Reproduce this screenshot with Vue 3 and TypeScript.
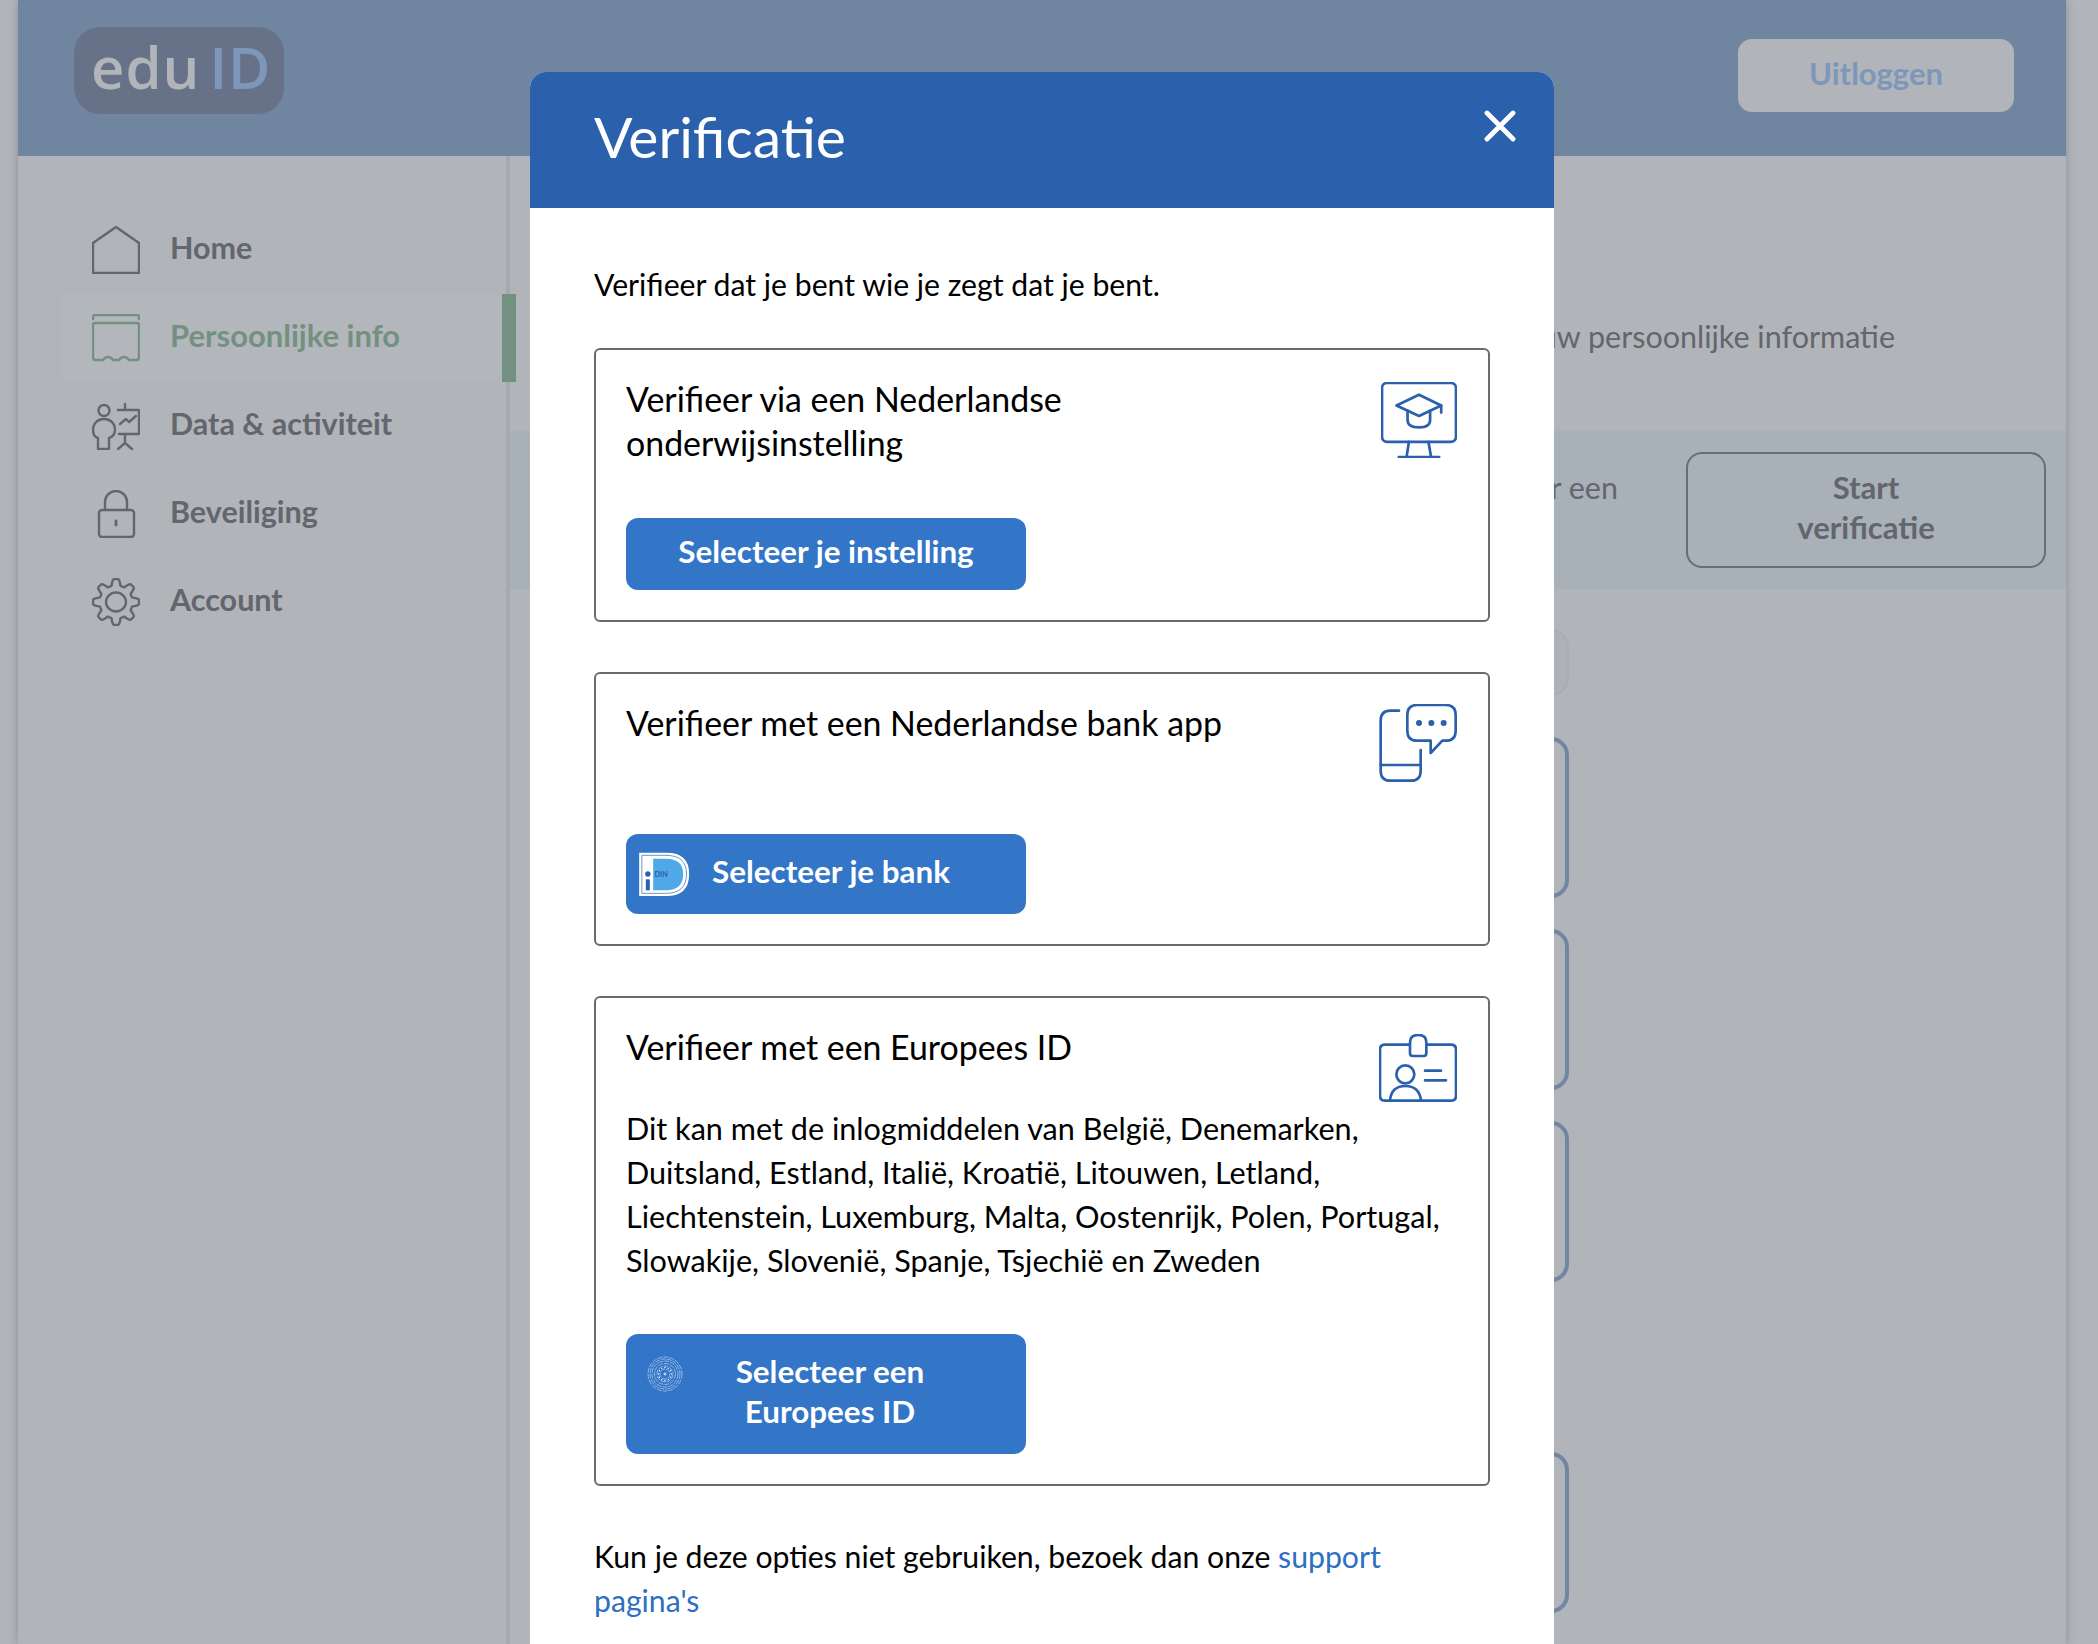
<script setup lang="ts">
const navItems = [
  { label: 'Home', icon: 'home', active: false },
  { label: 'Persoonlijke info', icon: 'person', active: true },
  { label: 'Data & activiteit', icon: 'data', active: false },
  { label: 'Beveiliging', icon: 'lock', active: false },
  { label: 'Account', icon: 'gear', active: false },
]

const detailBoxes = [
  { id: 'naam', muted: true },
  { id: 'email', muted: false },
  { id: 'telefoon', muted: false },
  { id: 'instelling', muted: false },
  { id: 'link', muted: false },
]

// wavy outline for the settings gear, eight teeth
function gearPath(): string {
  const pts: string[] = []
  for (let i = 0; i < 144; i++) {
    const a = (i / 144) * Math.PI * 2
    const wave = Math.max(-1, Math.min(1, Math.cos(a * 8) * 1.7))
    const r = 19.8 + wave * 3.2
    pts.push(`${(24 + Math.cos(a) * r).toFixed(2)} ${(24 + Math.sin(a) * r).toFixed(2)}`)
  }
  return 'M' + pts.join('L') + 'Z'
}

const gear = gearPath()
const euRings = [5, 8, 10.5, 13, 15, 17]
const euDots = Array.from({ length: 12 }, (_, i) => {
  const a = (i / 12) * Math.PI * 2
  return { x: 18 + Math.cos(a) * 6.5, y: 18 + Math.sin(a) * 6.5 }
})
</script>

<template>
  <div class="page">
    <header class="topbar">
      <div class="logo"><span>edu</span><span class="logo-id">ID</span></div>
      <button class="logout">Uitloggen</button>
    </header>
    <div class="columns">
      <nav class="sidebar">
        <a v-for="item in navItems" :key="item.label" class="nav-item" :class="{ active: item.active }">
          <svg class="nav-icon" viewBox="0 0 48 48" fill="none" stroke="currentColor" stroke-width="2.4" stroke-linejoin="round" stroke-linecap="round">
            <path v-if="item.icon === 'home'" d="M1 47V17L24 1L47 17V47Z" />
            <g v-else-if="item.icon === 'person'">
              <path d="M1 5V3Q1 1 3 1H45Q47 1 47 3V5" />
              <path d="M3 9H45Q47 9 47 11V43Q47 46 44 46H37Q35 43 32 43Q29 43 27 46H21Q19 43 16 43Q13 43 11 46H4Q1 46 1 43V11Q1 9 3 9Z" />
            </g>
            <g v-else-if="item.icon === 'data'">
              <circle cx="12" cy="8.5" r="5.5" />
              <path d="M6 47H17V36C20 35 23 33 23 28C23 21 18 17 12 17C6 17 1 21 1 28C1 33 3 35 6 36Z" />
              <path d="M26 8H47V32H27M33 2V8M33 32V41M26 47L33 41L40 47M28 22L34 17L37 20L44 14" />
            </g>
            <g v-else-if="item.icon === 'lock'">
              <rect x="7" y="20" width="35" height="27" rx="3" />
              <path d="M13 20V12A11 11 0 0 1 35 12V20" />
              <path d="M24 31V35" stroke-width="2.8" />
            </g>
            <g v-else>
              <path :d="gear" />
              <ellipse cx="24" cy="24" rx="10" ry="9.5" />
            </g>
          </svg>
          <span>{{ item.label }}</span>
        </a>
      </nav>
      <main class="content">
        <p class="intro">Bekijk, beheer en wijzig hier op elk moment uw persoonlijke informatie</p>
        <section class="verify-band">
          <p>Verifieer je account voor een<br />betere ervaring</p>
          <button class="start-btn">Start<br />verificatie</button>
        </section>
        <div class="details">
          <div v-for="box in detailBoxes" :key="box.id" class="detail-box" :class="[box.id, { muted: box.muted }]"></div>
        </div>
      </main>
    </div>
  </div>

  <div class="modal">
    <div class="modal-head">
      <h1>Verificatie</h1>
      <svg class="close" viewBox="0 0 32 32" fill="none" stroke="#fff" stroke-width="4.8" stroke-linecap="round">
        <path d="M3 3L29 29M29 3L3 29" />
      </svg>
    </div>
    <div class="modal-body">
      <p class="lead">Verifieer dat je bent wie je zegt dat je bent.</p>

      <section class="card">
        <div class="card-head">
          <h2>Verifieer via een Nederlandse onderwijsinstelling</h2>
          <svg class="card-icon" viewBox="124 127 226 226" fill="none" stroke="#2a60ac" stroke-width="8" stroke-linecap="round" stroke-linejoin="round">
            <rect x="127" y="130" width="220" height="175" rx="15" />
            <path d="M207 305L200 350M265 305L273 350M177 350H297" />
            <path d="M237 165L170 197L237 228L303 197Z" />
            <path d="M303 197V218M203 212V240Q203 262 237 262Q270 262 270 240V212" />
          </svg>
        </div>
        <button class="action action-plain">Selecteer je instelling</button>
      </section>

      <section class="card second">
        <div class="card-head">
          <h2>Verifieer met een Nederlandse bank app</h2>
          <svg class="card-icon phone" viewBox="116 75 232 234" fill="none" stroke="#2a60ac" stroke-width="8" stroke-linecap="round" stroke-linejoin="round">
            <path d="M175 95H150Q120 95 120 125V275Q120 305 150 305H210Q240 305 240 275V213" />
            <path d="M120 258H240" />
            <path d="M230 78H315Q345 78 345 108V155Q345 185 315 185H305L270 222V185H230Q200 185 200 155V108Q200 78 230 78Z" />
            <g fill="#2a60ac" stroke="none">
              <circle cx="235" cy="132" r="9" />
              <circle cx="272" cy="132" r="9" />
              <circle cx="309" cy="132" r="9" />
            </g>
          </svg>
        </div>
        <button class="action action-bank">
          <svg class="idin" viewBox="85 90 155 132">
            <path d="M88 92H170Q238 92 238 156Q238 222 170 222H88Z" fill="#fff" />
            <path d="M96 100H168Q230 100 230 156Q230 214 168 214H96Z" fill="#fff" stroke="#2a60ac" stroke-width="2" />
            <path d="M130 110H168Q220 110 220 156Q220 205 168 205H130Z" fill="#4fa8e8" />
            <circle cx="114" cy="156" r="8" fill="#2a60ac" />
            <rect x="108" y="172" width="12" height="33" fill="#2a60ac" />
            <text x="134" y="164" font-size="22" fill="#2a60ac">DIN</text>
          </svg>
          <span>Selecteer je bank</span>
        </button>
      </section>

      <section class="card">
        <div class="card-head short">
          <h2>Verifieer met een Europees ID</h2>
          <svg class="card-icon badge" viewBox="117 72 234 204" fill="none" stroke="#2a60ac" stroke-width="8" stroke-linecap="round" stroke-linejoin="round">
            <path d="M208 104H135Q120 104 120 119V257Q120 272 135 272H333Q348 272 348 257V119Q348 104 333 104H260" />
            <path d="M210 130V98Q210 75 235 75Q259 75 259 98V130Q259 138 251 138H218Q210 138 210 130Z" />
            <circle cx="196" cy="193" r="27" />
            <path d="M150 270Q155 228 196 228Q237 228 243 270M255 182H303M255 211H318" />
          </svg>
        </div>
        <p class="card-text">Dit kan met de inlogmiddelen van België, Denemarken, Duitsland, Estland, Italië, Kroatië, Litouwen, Letland, Liechtenstein, Luxemburg, Malta, Oostenrijk, Polen, Portugal, Slowakije, Slovenië, Spanje, Tsjechië en Zweden</p>
        <button class="action action-eu">
          <svg class="eu" viewBox="0 0 36 36" fill="none">
            <circle v-for="r in euRings" :key="r" cx="18" cy="18" :r="r" stroke="#bcd2ee" stroke-width=".7" stroke-dasharray="5 1" />
            <circle v-for="(d, i) in euDots" :key="i" :cx="d.x" :cy="d.y" r=".7" fill="#fff" />
            <path d="M16.5 18H19.5M18 16.5V19.5" stroke="#fff" stroke-width=".9" />
          </svg>
          <span>Selecteer een<br />Europees ID</span>
        </button>
      </section>

      <p class="support">Kun je deze opties niet gebruiken, bezoek dan onze <a>support pagina's</a></p>
    </div>
  </div>
</template>

<style>
html,
body {
  background: #b1b4b9;
}
</style>

<style scoped>
.page {
  margin: 0 32px 0 18px;
  height: 1644px;
  overflow: hidden;
  background: #b1b4b9;
  box-shadow: 0 0 8px rgba(70, 75, 85, 0.35);
  font-family: Lato, "Noto Sans", sans-serif;
  font-size: 30.5px;
  line-height: 44px;
  color: #63666c;
}
.topbar {
  height: 156px;
  background: #7086a0;
  display: flex;
  justify-content: space-between;
  align-items: flex-start;
  padding: 27px 52px 0 56px;
  box-sizing: border-box;
}
.logo {
  width: 210px;
  height: 87px;
  box-sizing: border-box;
  padding-left: 17px;
  border-radius: 26px;
  background: #677289;
  color: #b1b4b9;
  font-family: "Open Sans", sans-serif;
  font-weight: 600;
  font-size: 58px;
  line-height: 80px;
  letter-spacing: 1px;
}
.logo-id {
  margin-left: 9px;
  color: #7c97b9;
}
.logout {
  width: 276px;
  height: 73px;
  margin-top: 12px;
  border: 0;
  border-radius: 14px;
  background: #b1b4b9;
  color: #7c97b9;
  font: 700 31px/66px Lato, sans-serif;
  padding: 0 0 6px;
}
.columns {
  display: flex;
  height: 1488px;
}
.sidebar {
  position: relative;
  z-index: 1;
  width: 492px;
  flex: none;
  box-sizing: border-box;
  padding: 50px 0 0 44px;
  border-right: 4px solid #a6a9af;
  display: flex;
  flex-direction: column;
}
.nav-item {
  height: 88px;
  margin-right: -10px;
  padding-left: 30px;
  display: flex;
  align-items: center;
  gap: 30px;
  font-weight: 700;
  box-sizing: border-box;
}
.nav-item span {
  padding-bottom: 7px;
}
.nav-item.active {
  background: #b3b6bb;
  color: #739080;
  border-right: 14px solid #739080;
  font-size: 31px;
}
.nav-icon {
  width: 48px;
  height: 48px;
  flex: none;
}
.content {
  flex: 1;
  min-width: 0;
}
.intro {
  margin: 0;
  height: 275px;
  box-sizing: border-box;
  padding: 158px 171px 0 0;
  text-align: right;
  white-space: nowrap;
}
.verify-band {
  height: 158px;
  box-sizing: border-box;
  padding: 21px 20px 0 0;
  background: #a8b0b8;
  display: flex;
  justify-content: flex-end;
  gap: 68px;
}
.verify-band p {
  margin: 13px 0 0;
  line-height: 44px;
  white-space: nowrap;
}
.start-btn {
  width: 360px;
  height: 116px;
  flex: none;
  border: 2px solid #6a6d73;
  border-radius: 16px;
  background: transparent;
  color: #63666c;
  font: 700 31px/40px Lato, sans-serif;
  padding: 0 0 6px;
}
.details {
  padding: 40px 497px 0 40px;
}
.detail-box {
  height: 161px;
  box-sizing: border-box;
  margin-bottom: 31px;
  border: 4px solid #7286a3;
  border-radius: 18px;
}
.detail-box.muted {
  height: 67px;
  margin-bottom: 41px;
  border: 2px solid #a9acb2;
  background: #aeb1b6;
}
.detail-box.instelling {
  margin-bottom: 170px;
}
.modal {
  position: absolute;
  top: 72px;
  left: 530px;
  width: 1024px;
  height: 1572px;
  overflow: hidden;
  border-radius: 16px 16px 0 0;
  background: #fff;
  color: #000;
  font-family: Lato, "Noto Sans", sans-serif;
  font-size: 30.2px;
  line-height: 44px;
}
.modal-head {
  height: 136px;
  box-sizing: border-box;
  padding: 0 38px 0 64px;
  background: #2a60ac;
  display: flex;
  justify-content: space-between;
}
.modal-head h1 {
  margin: 0;
  color: #fff;
  font-size: 57px;
  font-weight: 400;
  line-height: 128px;
}
.close {
  width: 32px;
  height: 32px;
  margin-top: 38px;
}
.modal-body {
  padding: 54px 64px 0 64px;
}
.lead {
  margin: 0 0 42px;
}
.card {
  border: 2px solid #6b6b6b;
  border-radius: 6px;
  padding: 28px 31px 30px 30px;
  margin-bottom: 50px;
}
.card-head {
  min-height: 88px;
  display: flex;
  justify-content: space-between;
  align-items: flex-start;
}
.card-head.short {
  min-height: 43px;
}
.card-head h2 {
  margin: -1px 0 0;
  max-width: 640px;
  font: inherit;
  font-size: 33.9px;
}
.card-head .card-icon {
  flex: none;
  width: 76px;
  height: 76px;
  margin-top: 4px;
}
.card-head .phone {
  width: 78px;
  height: 78px;
  margin-top: 2px;
}
.card-head .badge {
  width: 78px;
  height: 68px;
  margin-top: 8px;
  margin-bottom: -33px;
}
.card-text {
  margin: 38px 0 51px;
  font-size: 30.6px;
}
.action {
  width: 400px;
  border: 0;
  border-radius: 12px;
  background: #3375c6;
  color: #fff;
  font: 700 31.4px/40px Lato, sans-serif;
  display: flex;
  align-items: center;
  box-sizing: border-box;
  padding: 0 0 6px;
}
.action-plain {
  height: 72px;
  margin-top: 52px;
  justify-content: center;
}
.action-bank {
  height: 80px;
  margin-top: 44px;
  padding-left: 12px;
  gap: 22px;
}
.idin {
  width: 52px;
  height: 44px;
  flex: none;
  margin-bottom: -6px;
}
.action-eu {
  height: 120px;
  padding: 0 49px 6px 21px;
}
.action-eu span {
  flex: 1;
  text-align: center;
}
.eu {
  width: 36px;
  height: 36px;
  flex: none;
  margin-bottom: 34px;
}
.support {
  margin: -2px 0 0;
  max-width: 880px;
}
.support a {
  color: #2d6fc0;
}
</style>
